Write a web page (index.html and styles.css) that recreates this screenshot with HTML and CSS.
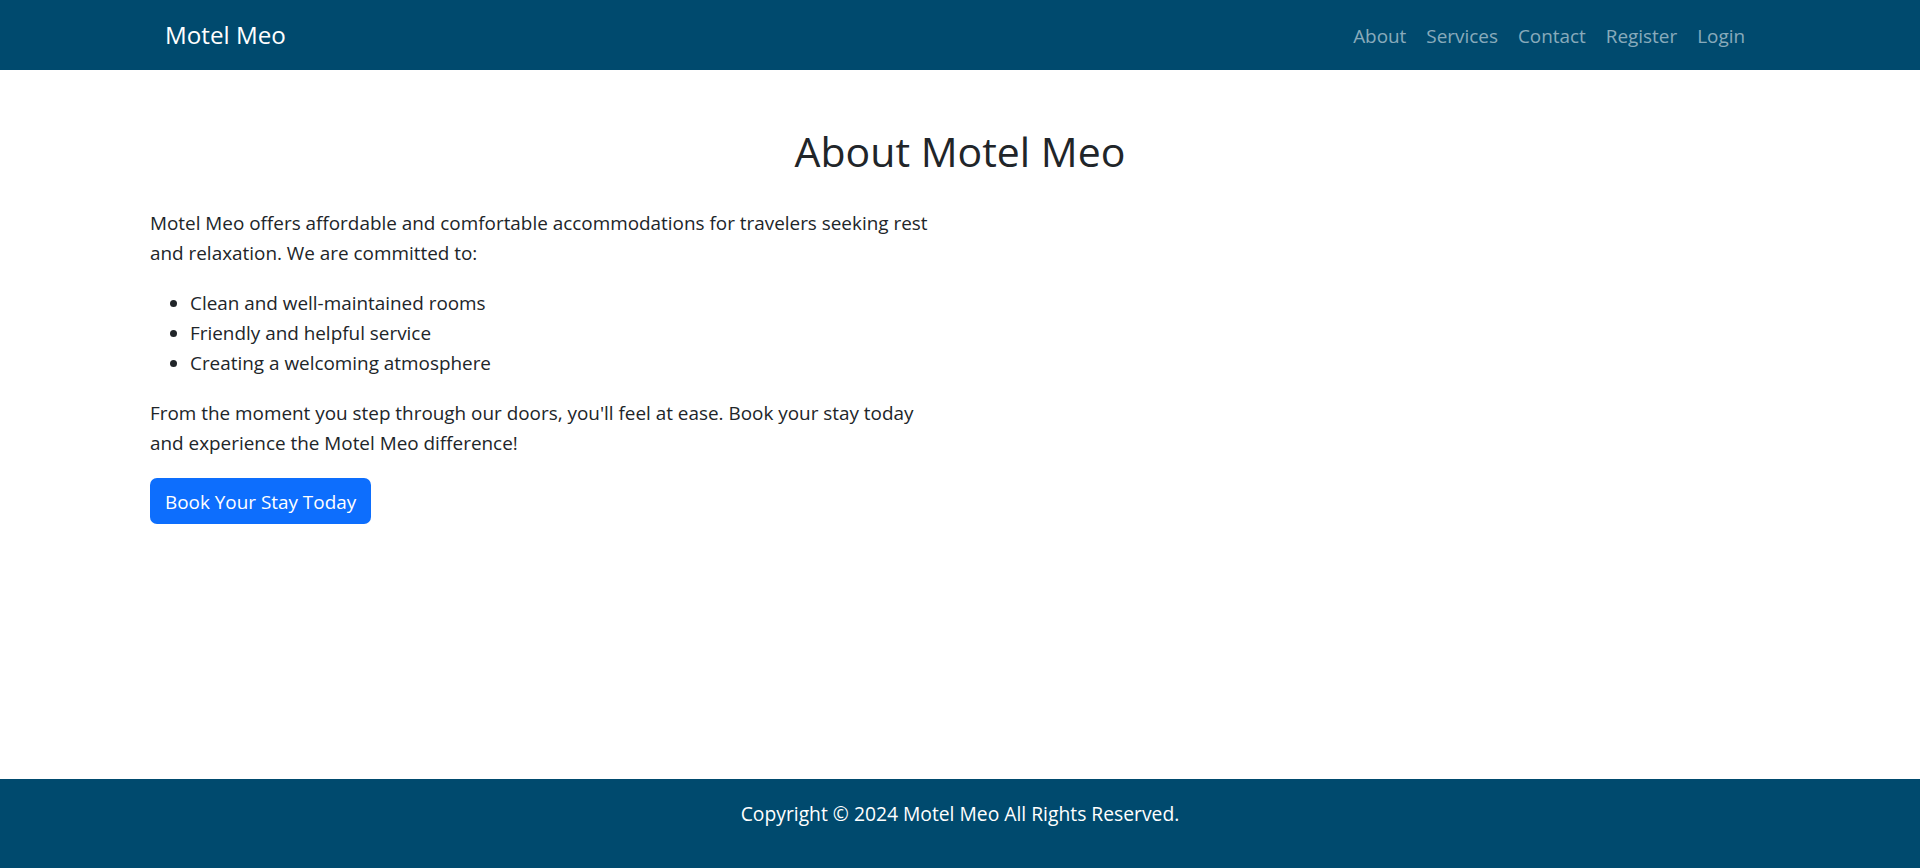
FILE: index.html
```html
<!DOCTYPE html>
<html lang="en">
<head>
<meta charset="utf-8">
<title>About - Motel Meo</title>
<link rel="stylesheet" href="styles.css">
</head>
<body>
<header class="navbar">
  <div class="nav-inner">
    <a class="brand" href="#">Motel Meo</a>
    <nav class="nav-links">
      <a href="#">About</a>
      <a href="#">Services</a>
      <a href="#">Contact</a>
      <a href="#">Register</a>
      <a href="#">Login</a>
    </nav>
  </div>
</header>
<main class="main">
  <div class="container">
    <h1 class="title">About Motel Meo</h1>
    <div class="row">
      <div class="col">
        <p class="text">Motel Meo offers affordable and comfortable accommodations for travelers seeking rest and relaxation. We are committed to:</p>
        <ul class="list">
          <li>Clean and well-maintained rooms</li>
          <li>Friendly and helpful service</li>
          <li>Creating a welcoming atmosphere</li>
        </ul>
        <p class="text">From the moment you step through our doors, you'll feel at ease. Book your stay today and experience the Motel Meo difference!</p>
        <a class="btn" href="#">Book Your Stay Today</a>
      </div>
    </div>
  </div>
</main>
<footer class="footer">
  <p>Copyright © 2024 Motel Meo All Rights Reserved.</p>
</footer>
</body>
</html>
```
FILE: styles.css
```css
html, body { margin: 0; padding: 0; }
body {
  font-family: "Open Sans", "Noto Sans", sans-serif;
  font-size: 18.9px;
  line-height: 30px;
  color: #212529;
  min-height: 100vh;
  display: flex;
  flex-direction: column;
  background: #fff;
}
a { text-decoration: none; }
.navbar { background: #004a6e; height: 70px; display: flex; align-items: center; }
.nav-inner { width: 1590px; margin: 0 auto; display: flex; justify-content: space-between; align-items: center; }
.brand { color: #fff; font-size: 24.2px; }
.nav-links { display: flex; padding-top: 2px; }
.nav-links a { color: rgba(255,255,255,.55); padding: 0 10px; }
.main { flex: 1; }
.container { width: 1620px; margin: 0 auto; }
.title { text-align: center; font-weight: 400; font-size: 41px; line-height: 48px; margin: 57px 0 33px; color: #212529; }
.row { display: flex; }
.col { width: 795px; }
.text { margin: 0 0 20px; }
.list { margin: 0 0 20px; padding-left: 40px; }
.btn { display: inline-block; background: #0d6efd; color: #fff; padding: 9px 15px 7px; border-radius: 7px; line-height: 30px; }
.footer { background: #004a6e; color: #fff; text-align: center; height: 89px; font-size: 19.3px; }
.footer p { margin: 0; padding-top: 20px; }
```
